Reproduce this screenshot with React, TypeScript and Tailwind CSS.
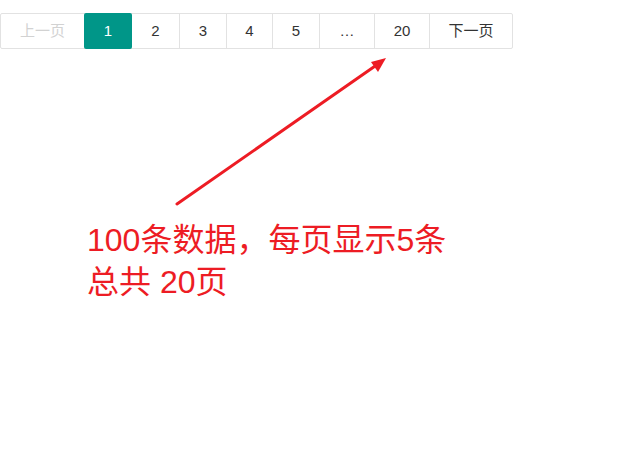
import React from 'react'

type Page = {
  label: string;
  width: string;
  kind?: 'current' | 'disabled' | 'plain';
}

const pages: Page[] = [
  { label: '上一页', width: 'w-[83px]', kind: 'disabled' },
  { label: '1', width: 'w-[48px]', kind: 'current' },
  { label: '2', width: 'w-[47px]' },
  { label: '3', width: 'w-[47px]' },
  { label: '4', width: 'w-[46px]' },
  { label: '5', width: 'w-[47px]' },
  { label: '…', width: 'w-[55px]' },
  { label: '20', width: 'w-[55px]' },
  { label: '下一页', width: 'w-[83px]' },
]

function Pager() {
  return (
    <div className="flex h-[36px] w-fit border border-[#e2e2e2] rounded-[2px] bg-white text-[15px] text-[#333]">
      {pages.map((p, i) => {
        let cls = 'flex items-center justify-center shrink-0 ' + p.width
        if (i > 0 && p.kind !== 'current' && pages[i - 1].kind !== 'current') cls += ' border-l border-[#e2e2e2]'
        if (p.kind === 'current') cls += ' bg-[#009688] text-white rounded-[2px] -my-px h-[36px]'
        if (p.kind === 'disabled') cls += ' text-[#d2d2d2]'
        return (
          <span key={i} className={cls}>{p.label}</span>
        )
      })}
    </div>
  )
}

export default function App() {
  return (
    <div className="relative w-[620px] h-[461px] bg-white overflow-hidden" style={{ fontFamily: '"Liberation Sans", "Noto Sans CJK SC", sans-serif' }}>
      <div className="pt-[13px]">
        <Pager />
      </div>

      {/* arrow pointing at the last page */}
      <svg className="absolute left-0 top-0" width="620" height="461">
        <line x1="177" y1="204" x2="378" y2="64" stroke="#ed1c24" strokeWidth="3" strokeLinecap="round" />
        <polygon points="386,58 371,62 378,72" fill="#ed1c24" />
      </svg>

      <div className="pl-[87px] pt-[170px] text-[32px] leading-[42px] text-[#ed1c24]">
        <div>100条数据，每页显示5条</div>
        <div>总共 20页</div>
      </div>
    </div>
  )
}
